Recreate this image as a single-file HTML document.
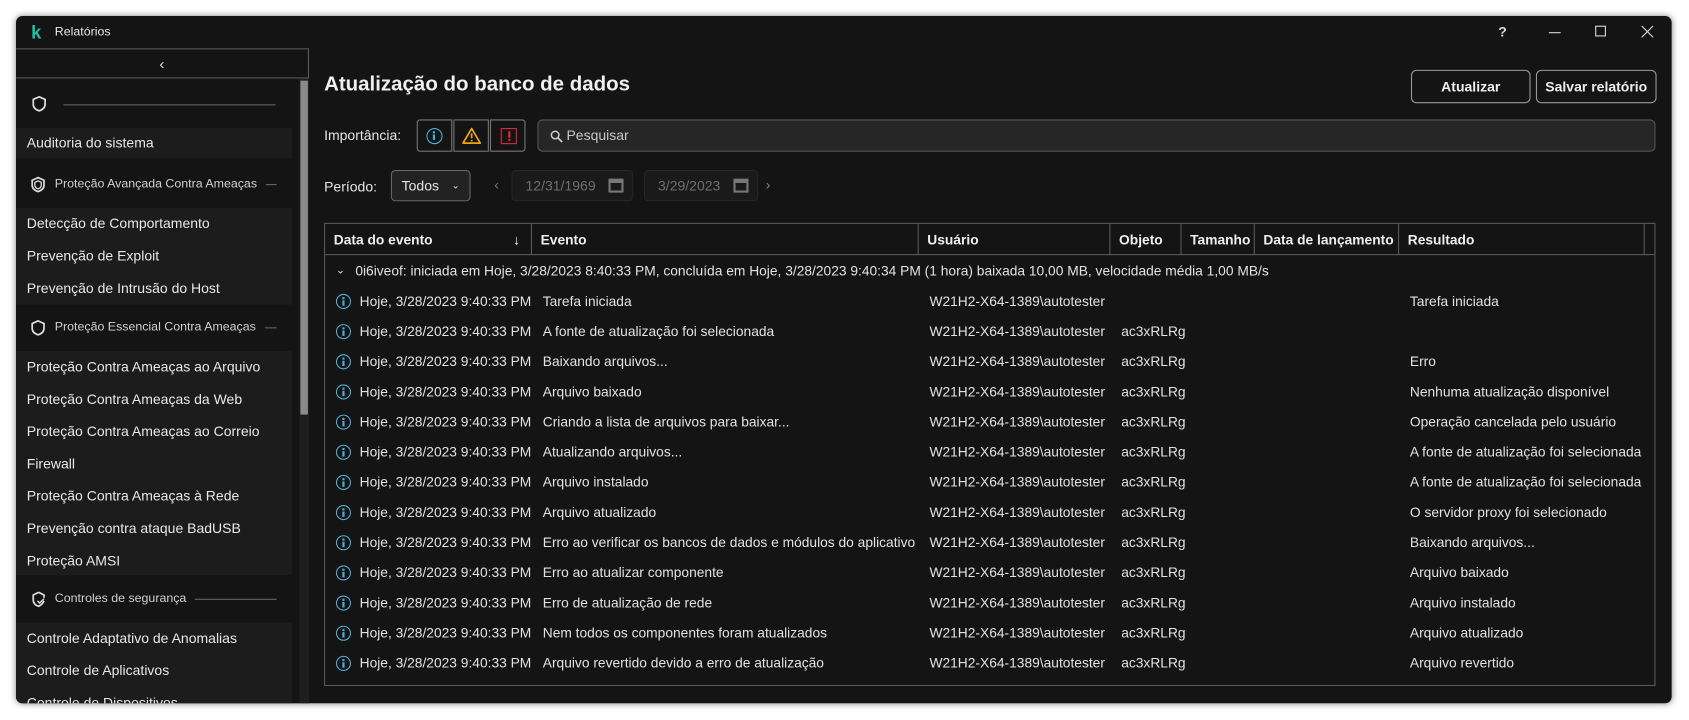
<!DOCTYPE html>
<html><head><meta charset="utf-8"><style>
*{box-sizing:border-box;margin:0;padding:0}
body{width:1689px;height:720px;background:#fff;font-family:"Liberation Sans",sans-serif;color:#e6e6e6;position:relative;overflow:hidden}
.win{position:absolute;left:16px;top:16px;width:1537px;height:638px;background:#141414;border-radius:6px;overflow:hidden;box-shadow:0 0 6px rgba(0,0,0,.5);transform:scale(1.0772);transform-origin:0 0}
.abs{position:absolute}
.side{position:absolute;left:0;top:30px;width:272px;height:608px;background:#141414}
.collapse{position:absolute;left:0;top:30px;width:272px;height:28px;border-top:1px solid #5a5a5a;border-bottom:1px solid #5a5a5a;border-right:1px solid #5a5a5a;text-align:center;color:#ddd;font-size:14px;line-height:26px}
.item{position:absolute;left:0;width:256px;background:#1c1c1c;font-size:13px;color:#e8e8e8;padding-left:10px}
.sec{position:absolute;left:0;width:256px;font-size:11.5px;color:#d0d0d0;padding-left:36px;padding-right:14px;display:flex;align-items:center}
.sec .ln{flex:1;height:1px;background:#666;margin-left:8px}
.scroll{position:absolute;left:264px;top:60px;width:7px;height:310px;background:#8a8a8a}
.scrolltrack{position:absolute;left:263px;top:58px;width:9px;height:580px;background:#1e1e1e}
.btn{position:absolute;border:1px solid #9a9a9a;border-radius:5px;font-size:13px;font-weight:bold;color:#eee;text-align:center;line-height:29px;height:31px}
.table{position:absolute;left:286px;top:192px;width:1236px;height:430px;border:1px solid #5a5a5a}
.hdr{position:absolute;left:0;top:0;height:29px;width:100%;border-bottom:1px solid #5a5a5a;font-size:12.8px;font-weight:bold;color:#eee}
.hdr div{position:absolute;top:0;height:29px;line-height:29px;padding-left:8px;border-right:1px solid #5a5a5a;white-space:nowrap;overflow:hidden}
.row{position:absolute;left:0;height:28px;width:100%;font-size:12.8px;color:#e2e2e2;line-height:28px}
.row span{position:absolute;top:0;white-space:nowrap}
.ic{position:absolute;left:10px;top:7px;width:14px;height:14px;border:1.5px solid #4bb0d8;border-radius:50%}
.ic:before{content:"";position:absolute;left:4.5px;top:2px;width:2px;height:2px;background:#4bb0d8}
.ic:after{content:"";position:absolute;left:4.5px;top:5px;width:2px;height:5px;background:#4bb0d8}
</style></head><body>
<div class="win">
  <div class="abs" style="left:14px;top:6px;font-size:17px;font-weight:bold;color:#1fbf9f">k</div>
  <div class="abs" style="left:36px;top:9px;font-size:11.5px;color:#e6e6e6">Relatórios</div>
  <div class="abs" style="left:1376px;top:7px;font-size:13px;font-weight:bold;color:#ddd">?</div>
  <div class="abs" style="left:1423px;top:15px;width:11px;height:1px;background:#ddd"></div>
  <div class="abs" style="left:1466px;top:9px;width:10px;height:10px;border:1px solid #ddd"></div>
  <svg class="abs" style="left:1509px;top:9px" width="11" height="11"><path d="M0 0L11 11M11 0L0 11" stroke="#ddd" stroke-width="1"/></svg>

  <div class="side"></div>
  <div class="collapse">‹</div>
  <div class="scrolltrack"></div>
  <div class="scroll"></div>
  <svg class="abs" style="left:15px;top:74px" width="13" height="15"><path d="M6.5 1L12 3.5V8C12 11 9.5 13 6.5 14C3.5 13 1 11 1 8V3.5Z" fill="none" stroke="#ddd" stroke-width="1.6"/></svg>
  <div class="abs" style="left:44px;top:82px;width:197px;height:1px;background:#666"></div>
  <div class="item" style="top:104px;height:28px;line-height:28px">Auditoria do sistema</div>
  <div class="sec" style="top:142px;height:28px"><svg class="abs" style="left:14px;top:7px" width="13" height="15"><path d="M6.5 1L12 3.5V8C12 11 9.5 13 6.5 14C3.5 13 1 11 1 8V3.5Z" fill="none" stroke="#ddd" stroke-width="1.6"/><path d="M6.5 4L9.5 5.5V8C9.5 10 8 11 6.5 11.5C5 11 3.5 10 3.5 8V5.5Z" fill="none" stroke="#ddd" stroke-width="1.2"/></svg><span>Proteção Avançada Contra Ameaças</span><div class="ln"></div></div>
  <div class="item" style="top:178px;height:90px">
    <div style="height:30px;line-height:30px">Detecção de Comportamento</div>
    <div style="height:30px;line-height:30px">Prevenção de Exploit</div>
    <div style="height:30px;line-height:30px">Prevenção de Intrusão do Host</div>
  </div>
  <div class="sec" style="top:275px;height:28px"><svg class="abs" style="left:14px;top:7px" width="13" height="15"><path d="M6.5 1L12 3.5V8C12 11 9.5 13 6.5 14C3.5 13 1 11 1 8V3.5Z" fill="none" stroke="#ddd" stroke-width="1.6"/></svg><span>Proteção Essencial Contra Ameaças</span><div class="ln"></div></div>
  <div class="item" style="top:311px;height:208px">
    <div style="height:30px;line-height:30px">Proteção Contra Ameaças ao Arquivo</div>
    <div style="height:30px;line-height:30px">Proteção Contra Ameaças da Web</div>
    <div style="height:30px;line-height:30px">Proteção Contra Ameaças ao Correio</div>
    <div style="height:30px;line-height:30px">Firewall</div>
    <div style="height:30px;line-height:30px">Proteção Contra Ameaças à Rede</div>
    <div style="height:30px;line-height:30px">Prevenção contra ataque BadUSB</div>
    <div style="height:30px;line-height:30px">Proteção AMSI</div>
  </div>
  <div class="sec" style="top:527px;height:28px"><svg class="abs" style="left:14px;top:7px" width="14" height="15"><path d="M7 1L12 3.5V6M12 9C11 11.5 9 13 7 14C4 13 2 11 2 8V3.5L7 1" fill="none" stroke="#ddd" stroke-width="1.6"/><path d="M6 9L8 11L12 7" fill="none" stroke="#ddd" stroke-width="1.4"/></svg><span>Controles de segurança</span><div class="ln"></div></div>
  <div class="item" style="top:563px;height:75px">
    <div style="height:30px;line-height:30px">Controle Adaptativo de Anomalias</div>
    <div style="height:30px;line-height:30px">Controle de Aplicativos</div>
    <div style="height:30px;line-height:30px">Controle de Dispositivos</div>
  </div>

  <div class="abs" style="left:286px;top:53px;font-size:19px;font-weight:bold;color:#f0f0f0">Atualização do banco de dados</div>
  <div class="btn" style="left:1295px;top:50px;width:111px">Atualizar</div>
  <div class="btn" style="left:1411px;top:50px;width:112px">Salvar relatório</div>

  <div class="abs" style="left:286px;top:103px;font-size:13px">Importância:</div>
  <div class="abs" style="left:372px;top:96px;width:33px;height:30px;border:1px solid #777;border-radius:3px 0 0 3px"><div class="ic" style="left:8px;top:7px;width:15px;height:15px"></div></div>
  <div class="abs" style="left:406px;top:96px;width:33px;height:30px;border:1px solid #777"><svg style="position:absolute;left:7px;top:6px" width="18" height="16"><path d="M9 1.5L17 15H1Z" fill="none" stroke="#f0a500" stroke-width="1.6" stroke-linejoin="round"/><path d="M9 6V10.5M9 12V13.5" stroke="#f0a500" stroke-width="1.6"/></svg></div>
  <div class="abs" style="left:440px;top:96px;width:33px;height:30px;border:1px solid #777;border-radius:0 3px 3px 0"><div style="position:absolute;left:9px;top:7px;width:15px;height:15px;border:1.5px solid #e0283a"></div><div style="position:absolute;left:15.5px;top:10px;width:2px;height:6px;background:#e0283a"></div><div style="position:absolute;left:15.5px;top:17px;width:2px;height:2px;background:#e0283a"></div></div>
  <div class="abs" style="left:484px;top:96px;width:1038px;height:30px;border:1px solid #555;border-radius:5px;background:#262626;font-size:13px;color:#c8c8c8;line-height:28px;padding-left:26px"><svg style="position:absolute;left:11px;top:9px" width="12" height="12"><circle cx="4.5" cy="4.5" r="3.5" fill="none" stroke="#ccc" stroke-width="1.4"/><path d="M7 7L11 11" stroke="#ccc" stroke-width="1.6"/></svg>Pesquisar</div>

  <div class="abs" style="left:286px;top:151px;font-size:13px">Período:</div>
  <div class="abs" style="left:348px;top:143px;width:74px;height:29px;border:1px solid #666;border-radius:4px;background:#222;font-size:13px;line-height:27px;padding-left:9px">Todos<span style="position:absolute;right:9px;top:0;font-size:9px">⌄</span></div>
  <div class="abs" style="left:444px;top:149px;font-size:13px;color:#777">‹</div>
  <div class="abs" style="left:460px;top:143px;width:113px;height:29px;border:1px solid #262626;border-radius:4px;background:#1a1a1a;font-size:13px;line-height:27px;padding-left:12px;color:#6f6f6f">12/31/1969<span style="position:absolute;right:8px;top:7px;width:14px;height:13px;border:2px solid #777;border-top-width:4px"></span></div>
  <div class="abs" style="left:583px;top:143px;width:106px;height:29px;border:1px solid #262626;border-radius:4px;background:#1a1a1a;font-size:13px;line-height:27px;padding-left:12px;color:#6f6f6f">3/29/2023<span style="position:absolute;right:8px;top:7px;width:14px;height:13px;border:2px solid #777;border-top-width:4px"></span></div>
  <div class="abs" style="left:696px;top:149px;font-size:13px;color:#888">›</div>

  <div class="table">
    <div class="hdr">
      <div style="left:0;width:192px">Data do evento<span style="position:absolute;right:10px">↓</span></div>
      <div style="left:192px;width:359px">Evento</div>
      <div style="left:551px;width:178px">Usuário</div>
      <div style="left:729px;width:66px">Objeto</div>
      <div style="left:795px;width:68px">Tamanho</div>
      <div style="left:863px;width:134px">Data de lançamento</div>
      <div style="left:997px;width:228px">Resultado</div>
    </div>
    <div class="row" style="top:30px"><span style="left:10px;font-size:10px">⌄</span><span style="left:28px">0i6iveof: iniciada em Hoje, 3/28/2023 8:40:33 PM, concluída em Hoje, 3/28/2023 9:40:34 PM (1 hora) baixada 10,00 MB, velocidade média 1,00 MB/s</span></div>
    <div class="row" style="top:58px"><i class="ic"></i><span style="left:32px">Hoje, 3/28/2023 9:40:33 PM</span><span style="left:202px">Tarefa iniciada</span><span style="left:561px">W21H2-X64-1389\autotester</span><span style="left:1007px">Tarefa iniciada</span></div>
    <div class="row" style="top:86px"><i class="ic"></i><span style="left:32px">Hoje, 3/28/2023 9:40:33 PM</span><span style="left:202px">A fonte de atualização foi selecionada</span><span style="left:561px">W21H2-X64-1389\autotester</span><span style="left:739px">ac3xRLRg</span></div>
    <div class="row" style="top:114px"><i class="ic"></i><span style="left:32px">Hoje, 3/28/2023 9:40:33 PM</span><span style="left:202px">Baixando arquivos...</span><span style="left:561px">W21H2-X64-1389\autotester</span><span style="left:739px">ac3xRLRg</span><span style="left:1007px">Erro</span></div>
    <div class="row" style="top:142px"><i class="ic"></i><span style="left:32px">Hoje, 3/28/2023 9:40:33 PM</span><span style="left:202px">Arquivo baixado</span><span style="left:561px">W21H2-X64-1389\autotester</span><span style="left:739px">ac3xRLRg</span><span style="left:1007px">Nenhuma atualização disponível</span></div>
    <div class="row" style="top:170px"><i class="ic"></i><span style="left:32px">Hoje, 3/28/2023 9:40:33 PM</span><span style="left:202px">Criando a lista de arquivos para baixar...</span><span style="left:561px">W21H2-X64-1389\autotester</span><span style="left:739px">ac3xRLRg</span><span style="left:1007px">Operação cancelada pelo usuário</span></div>
    <div class="row" style="top:198px"><i class="ic"></i><span style="left:32px">Hoje, 3/28/2023 9:40:33 PM</span><span style="left:202px">Atualizando arquivos...</span><span style="left:561px">W21H2-X64-1389\autotester</span><span style="left:739px">ac3xRLRg</span><span style="left:1007px">A fonte de atualização foi selecionada</span></div>
    <div class="row" style="top:226px"><i class="ic"></i><span style="left:32px">Hoje, 3/28/2023 9:40:33 PM</span><span style="left:202px">Arquivo instalado</span><span style="left:561px">W21H2-X64-1389\autotester</span><span style="left:739px">ac3xRLRg</span><span style="left:1007px">A fonte de atualização foi selecionada</span></div>
    <div class="row" style="top:254px"><i class="ic"></i><span style="left:32px">Hoje, 3/28/2023 9:40:33 PM</span><span style="left:202px">Arquivo atualizado</span><span style="left:561px">W21H2-X64-1389\autotester</span><span style="left:739px">ac3xRLRg</span><span style="left:1007px">O servidor proxy foi selecionado</span></div>
    <div class="row" style="top:282px"><i class="ic"></i><span style="left:32px">Hoje, 3/28/2023 9:40:33 PM</span><span style="left:202px">Erro ao verificar os bancos de dados e módulos do aplicativo</span><span style="left:561px">W21H2-X64-1389\autotester</span><span style="left:739px">ac3xRLRg</span><span style="left:1007px">Baixando arquivos...</span></div>
    <div class="row" style="top:310px"><i class="ic"></i><span style="left:32px">Hoje, 3/28/2023 9:40:33 PM</span><span style="left:202px">Erro ao atualizar componente</span><span style="left:561px">W21H2-X64-1389\autotester</span><span style="left:739px">ac3xRLRg</span><span style="left:1007px">Arquivo baixado</span></div>
    <div class="row" style="top:338px"><i class="ic"></i><span style="left:32px">Hoje, 3/28/2023 9:40:33 PM</span><span style="left:202px">Erro de atualização de rede</span><span style="left:561px">W21H2-X64-1389\autotester</span><span style="left:739px">ac3xRLRg</span><span style="left:1007px">Arquivo instalado</span></div>
    <div class="row" style="top:366px"><i class="ic"></i><span style="left:32px">Hoje, 3/28/2023 9:40:33 PM</span><span style="left:202px">Nem todos os componentes foram atualizados</span><span style="left:561px">W21H2-X64-1389\autotester</span><span style="left:739px">ac3xRLRg</span><span style="left:1007px">Arquivo atualizado</span></div>
    <div class="row" style="top:394px"><i class="ic"></i><span style="left:32px">Hoje, 3/28/2023 9:40:33 PM</span><span style="left:202px">Arquivo revertido devido a erro de atualização</span><span style="left:561px">W21H2-X64-1389\autotester</span><span style="left:739px">ac3xRLRg</span><span style="left:1007px">Arquivo revertido</span></div>
  </div>
</div>
</body></html>
